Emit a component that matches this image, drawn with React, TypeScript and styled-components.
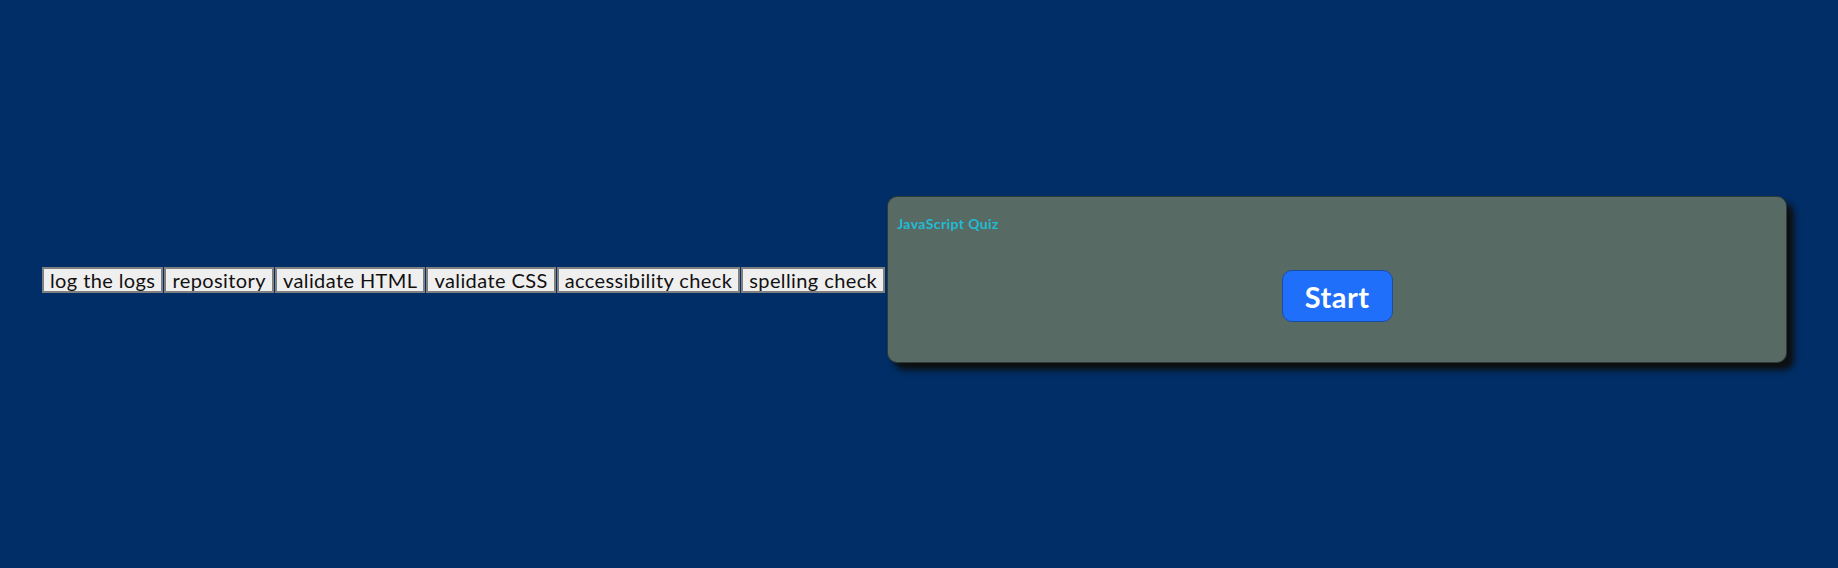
import React from "react";
import styled, { createGlobalStyle } from "styled-components";

const Global = createGlobalStyle`
  html, body {
    margin: 0;
    padding: 0;
    background: #012e67;
    font-family: "Lato", "Noto Sans", sans-serif;
  }
`;

const Page = styled.main`
  display: flex;
  align-items: flex-start;
  padding: 196px 0 0 42px;
  min-height: 100vh;
  box-sizing: border-box;
`;

const Row = styled.div`
  display: flex;
  align-items: center;
`;

const Toolbar = styled.nav`
  display: flex;
  gap: 1px;
  margin-right: 2px;
`;

const ToolButton = styled.button`
  font-family: "Lato", "Noto Sans", sans-serif;
  font-size: 20px;
  letter-spacing: 0.4px;
  line-height: 20px;
  color: #111;
  background: #efefef;
  border: 2px solid #808080;
  border-radius: 0;
  padding: 1px 6px;
  margin: 0;
  cursor: pointer;
`;

const Card = styled.section`
  width: 900px;
  height: 167px;
  box-sizing: border-box;
  background: #586a64;
  border: 1px solid rgba(0, 0, 0, 0.45);
  border-radius: 10px;
  box-shadow: 7px 7px 6px #0d0f0f;
  padding: 19px 9px 13px;
  display: flex;
  flex-direction: column;
`;

const Title = styled.h1`
  margin: 0;
  font-size: 14px;
  letter-spacing: 0.4px;
  line-height: 16px;
  font-weight: 700;
  color: #1fbcd4;
  font-family: "Lato", "Noto Sans", sans-serif;
`;

const Stage = styled.div`
  display: flex;
  justify-content: center;
  padding-top: 38px;
`;

const StartButton = styled.button`
  width: 111px;
  height: 52px;
  border-radius: 10px;
  background: #1f6ffa;
  border: 1px solid #1a4ea6;
  color: #fff;
  font-family: "Lato", "Noto Sans", sans-serif;
  font-size: 29px;
  font-weight: 700;
  letter-spacing: 0.5px;
  padding: 0;
  cursor: pointer;
`;

const tools = [
  "log the logs",
  "repository",
  "validate HTML",
  "validate CSS",
  "accessibility check",
  "spelling check",
];

export default function App() {
  return (
    <>
      <Global />
      <Page>
        <Row>
          <Toolbar>
            {tools.map((t) => (
              <ToolButton key={t}>{t}</ToolButton>
            ))}
          </Toolbar>
          <Card>
            <Title>JavaScript Quiz</Title>
            <Stage>
              <StartButton>Start</StartButton>
            </Stage>
          </Card>
        </Row>
      </Page>
    </>
  );
}
